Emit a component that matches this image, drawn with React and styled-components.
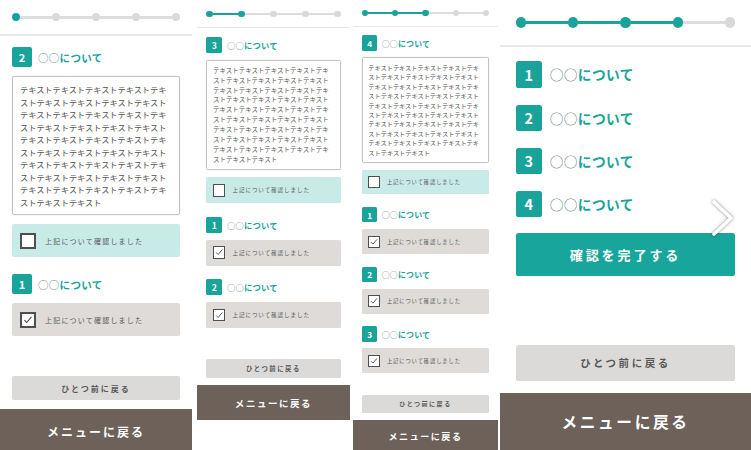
import styled, { createGlobalStyle } from "styled-components";

const u = (n) => `calc(var(--s) * ${n}px)`;

const TEAL = "#19a39a";
const BODY_TEXT = "テキスト".repeat(43);

const GlobalStyle = createGlobalStyle`
  body {
    margin: 0;
    background: #fff;
    font-family: "Noto Sans CJK JP", "Noto Sans", sans-serif;
  }
`;

const Page = styled.main`
  display: flex;
  align-items: flex-start;
  width: 751px;
  height: 450px;
  overflow: hidden;
  background: #fff;
`;

const Screen = styled.section`
  --s: ${(p) => p.$s};
  position: relative;
  display: flex;
  flex-direction: column;
  flex: none;
  width: ${(p) => p.$w}px;
  height: ${(p) => p.$h}px;
  margin-left: ${(p) => p.$ml}px;
  background: #fff;
`;

const Progress = styled.div`
  display: flex;
  align-items: center;
  box-sizing: border-box;
  height: ${u(36)};
  padding: 0 ${u(12)};
  border-bottom: ${u(2)} solid #e8e8e8;
`;

const Dot = styled.span`
  flex: none;
  width: ${u(8)};
  height: ${u(8)};
  border-radius: 50%;
  background: ${(p) => (p.$done ? TEAL : "#d9d9d9")};
`;

const Seg = styled.span`
  flex: 1;
  height: ${u(3)};
  background: ${(p) => (p.$done ? TEAL : "#dddddd")};
`;

const Body = styled.div`
  display: flex;
  flex-direction: column;
  padding: ${u(11)} ${u(12)} 0;
`;

const Head = styled.div`
  display: flex;
  align-items: center;
  gap: ${u(6)};
  height: ${u(20)};
`;

const Badge = styled.span`
  display: flex;
  align-items: center;
  justify-content: center;
  width: ${u(20)};
  height: ${u(20)};
  border-radius: ${u(2)};
  background: ${TEAL};
  color: #fff;
  font-size: ${u(11)};
  font-weight: 700;
`;

const Title = styled.span`
  color: ${TEAL};
  font-size: ${u(10.5)};
  font-weight: 700;
  letter-spacing: ${u(0.3)};

  & > span {
    font-weight: 400;
    color: #5f8683;
  }
`;

const TextBox = styled.div`
  margin-top: ${u(9)};
  padding: ${u(6)} ${u(7)};
  border: 1px solid #c4c4c4;
  border-radius: ${u(2)};
  box-shadow: 0 0 ${u(2)} rgba(0, 0, 0, 0.12);
  color: #555;
  font-size: ${u(8.2)};
  line-height: ${u(12.5)};
  word-break: break-all;
`;

const CheckRow = styled.div`
  display: flex;
  align-items: center;
  gap: ${u(9)};
  height: ${u(33)};
  margin-top: ${u(9)};
  padding-left: ${u(8)};
  border-radius: ${u(2)};
  background: ${(p) => (p.$checked ? "#dedbd8" : "#c8ebe8")};
`;

const Box = styled.span`
  display: flex;
  align-items: center;
  justify-content: center;
  flex: none;
  box-sizing: border-box;
  width: ${u(16)};
  height: ${u(16)};
  border: ${u(2)} solid #4f4f4f;
  background: #fff;

  svg {
    width: 100%;
    height: 100%;
  }
`;

const Label = styled.span`
  color: #5a5a5a;
  font-size: ${u(7)};
  letter-spacing: ${u(1.2)};
`;

const Group = styled.div`
  display: flex;
  flex-direction: column;
  margin-top: ${u(17)};
`;

const List = styled.div`
  display: flex;
  flex-direction: column;
  gap: ${u(13)};
`;

const ConfirmButton = styled.div`
  display: flex;
  align-items: center;
  justify-content: center;
  height: ${u(33)};
  margin-top: ${u(12)};
  border-radius: ${u(2)};
  background: #17a59c;
  color: #fff;
  font-size: ${u(10)};
  font-weight: 700;
  letter-spacing: ${u(2.2)};
`;

const Footer = styled.div`
  display: flex;
  flex-direction: column;
  margin-top: auto;
`;

const BackButton = styled.div`
  display: flex;
  align-items: center;
  justify-content: center;
  height: ${(p) => u(p.$h)};
  margin: 0 ${u(12)};
  border-radius: ${u(2)};
  background: #dcdad8;
  color: #585858;
  font-size: ${u(8)};
  font-weight: 700;
  letter-spacing: ${u(2)};
`;

const MenuBar = styled.div`
  display: flex;
  align-items: center;
  justify-content: center;
  flex: none;
  height: ${u(44)};
  margin-top: ${u(9)};
  background: #6e615a;
  color: #fff;
  font-size: ${u(12)};
  font-weight: 700;
  letter-spacing: ${u(2)};
`;

const Chevron = styled.svg`
  position: absolute;
  left: 210px;
  top: 199px;
  width: 26px;
  height: 38px;
  filter: drop-shadow(0 0 1.5px rgba(0, 0, 0, 0.5));
`;

function Steps({ step }) {
  const items = [];
  for (let i = 1; i <= 5; i++) {
    if (i > 1) items.push(<Seg key={"s" + i} $done={i <= step} />);
    items.push(<Dot key={"d" + i} $done={i <= step} />);
  }
  return <Progress>{items}</Progress>;
}

function SectionHead({ n }) {
  return (
    <Head>
      <Badge>{n}</Badge>
      <Title>
        <span>○○</span>について
      </Title>
    </Head>
  );
}

function Check({ checked }) {
  return (
    <CheckRow $checked={checked}>
      <Box>
        {checked && (
          <svg viewBox="0 0 16 16">
            <polyline
              points="3.2,8.2 6.3,11.3 12.6,3.8"
              fill="none"
              stroke="#4a4a4a"
              strokeWidth="1.4"
            />
          </svg>
        )}
      </Box>
      <Label>上記について確認しました</Label>
    </CheckRow>
  );
}

function Bottom({ backH = 24 }) {
  return (
    <Footer>
      <BackButton $h={backH}>ひとつ前に戻る</BackButton>
      <MenuBar>メニューに戻る</MenuBar>
    </Footer>
  );
}

const screens = [
  { s: 1, w: 192, h: 453, ml: 0, current: 2, done: [1] },
  { s: 0.79, w: 153, h: 420, ml: 5, current: 3, done: [1, 2] },
  { s: 0.755, w: 145, h: 453, ml: 3, current: 4, done: [1, 2, 3] },
];

export default function App() {
  return (
    <>
      <GlobalStyle />
      <Page>
        {screens.map((sc) => (
          <Screen key={sc.current} $s={sc.s} $w={sc.w} $h={sc.h} $ml={sc.ml}>
            <Steps step={sc.current - 1} />
            <Body>
              <SectionHead n={sc.current} />
              <TextBox>{BODY_TEXT}</TextBox>
              <Check checked={false} />
              {sc.done.map((n) => (
                <Group key={n}>
                  <SectionHead n={n} />
                  <Check checked />
                </Group>
              ))}
            </Body>
            <Bottom />
          </Screen>
        ))}
        <Screen $s={1.307} $w={251} $h={450} $ml={2}>
          <Steps step={4} />
          <Body>
            <List>
              {[1, 2, 3, 4].map((n) => (
                <SectionHead key={n} n={n} />
              ))}
            </List>
            <ConfirmButton>確認を完了する</ConfirmButton>
          </Body>
          <Bottom backH={27.5} />
          <Chevron viewBox="0 0 26 38">
            <polyline
              points="4,3 21,19 4,35"
              fill="none"
              stroke="#fff"
              strokeWidth="3.6"
              strokeLinecap="round"
              strokeLinejoin="round"
            />
          </Chevron>
        </Screen>
      </Page>
    </>
  );
}
